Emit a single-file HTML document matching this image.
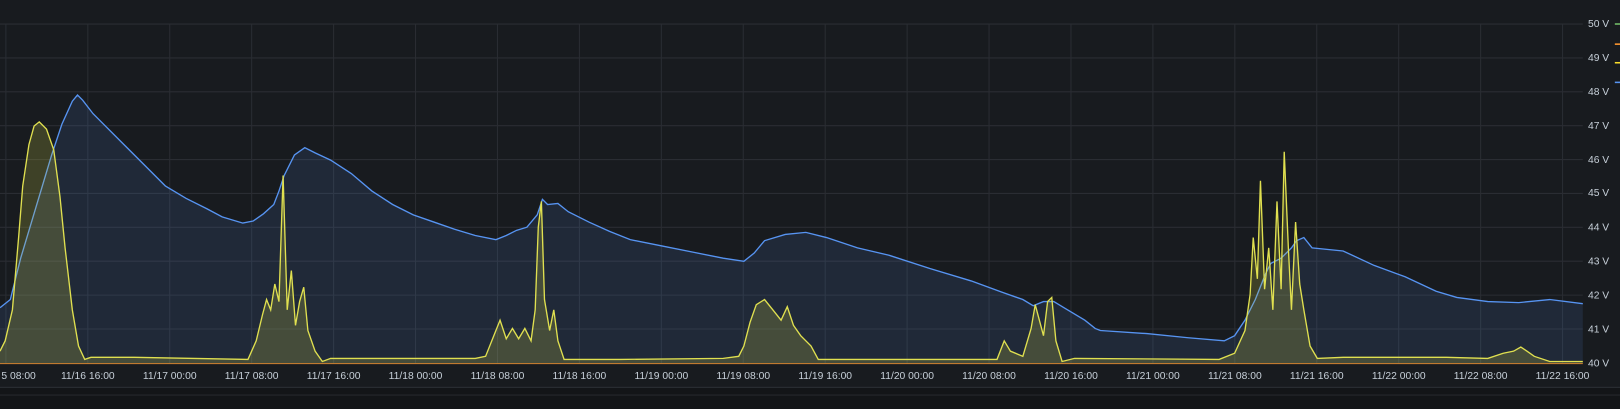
<!DOCTYPE html>
<html><head><style>
html,body{margin:0;padding:0;background:#181b1f;width:1620px;height:409px;overflow:hidden}
svg{display:block}
text{font-family:"Liberation Sans",sans-serif;font-size:10px;fill:#c7d0d9}
</style></head><body>
<svg width="1620" height="409" viewBox="0 0 1568 396" preserveAspectRatio="none">
<rect x="0" y="0" width="1568" height="396" fill="#181b1f"/>
<g stroke="#2a2d33" stroke-width="1">
<line x1="0" y1="23.3" x2="1532" y2="23.3"/><line x1="0" y1="56.1" x2="1532" y2="56.1"/>
<line x1="0" y1="88.9" x2="1532" y2="88.9"/><line x1="0" y1="121.7" x2="1532" y2="121.7"/>
<line x1="0" y1="154.5" x2="1532" y2="154.5"/><line x1="0" y1="187.3" x2="1532" y2="187.3"/>
<line x1="0" y1="220.1" x2="1532" y2="220.1"/><line x1="0" y1="252.9" x2="1532" y2="252.9"/>
<line x1="0" y1="285.7" x2="1532" y2="285.7"/><line x1="0" y1="318.5" x2="1532" y2="318.5"/>
<line x1="5.7" y1="23" x2="5.7" y2="352"/><line x1="85" y1="23" x2="85" y2="352"/><line x1="164.3" y1="23" x2="164.3" y2="352"/><line x1="243.6" y1="23" x2="243.6" y2="352"/><line x1="322.9" y1="23" x2="322.9" y2="352"/><line x1="402.2" y1="23" x2="402.2" y2="352"/><line x1="481.5" y1="23" x2="481.5" y2="352"/><line x1="560.8" y1="23" x2="560.8" y2="352"/><line x1="640.1" y1="23" x2="640.1" y2="352"/><line x1="719.4" y1="23" x2="719.4" y2="352"/><line x1="798.7" y1="23" x2="798.7" y2="352"/><line x1="878" y1="23" x2="878" y2="352"/><line x1="957.3" y1="23" x2="957.3" y2="352"/><line x1="1036.6" y1="23" x2="1036.6" y2="352"/><line x1="1115.9" y1="23" x2="1115.9" y2="352"/><line x1="1195.2" y1="23" x2="1195.2" y2="352"/><line x1="1274.5" y1="23" x2="1274.5" y2="352"/><line x1="1353.8" y1="23" x2="1353.8" y2="352"/><line x1="1433.1" y1="23" x2="1433.1" y2="352"/><line x1="1512.4" y1="23" x2="1512.4" y2="352"/>
</g>
<polygon fill="rgba(87,148,242,0.12)" points="0,352 0,298 10,290 20,250 35,200 50,150 60,120 70,98 75,92 80,97 90,110 100,120 120,140 140,160 160,180 180,192 200,202 215,210 235,216 245,214 255,207 265,198 270,185 275,170 285,150 295,143 305,148 320,155 340,168 360,185 380,198 400,208 420,215 440,222 460,228 480,232 490,228 500,223 510,220 520,208 525,193 530,198 540,197 550,205 570,215 590,224 610,232 640,238 670,244 700,250 720,253 730,245 740,233 760,227 780,225 800,230 830,240 860,247 900,260 940,272 970,283 990,290 1000,296 1010,292 1020,292 1030,298 1050,310 1060,318 1065,320 1110,323 1150,327 1185,330 1195,325 1205,310 1215,290 1225,265 1230,255 1240,250 1250,240 1255,233 1262,230 1270,240 1300,243 1330,257 1360,268 1390,282 1410,288 1440,292 1470,293 1500,290 1532,294 1532,352"/>
<polyline fill="none" stroke="#5794f2" stroke-width="1.3" points="0,298 10,290 20,250 35,200 50,150 60,120 70,98 75,92 80,97 90,110 100,120 120,140 140,160 160,180 180,192 200,202 215,210 235,216 245,214 255,207 265,198 270,185 275,170 285,150 295,143 305,148 320,155 340,168 360,185 380,198 400,208 420,215 440,222 460,228 480,232 490,228 500,223 510,220 520,208 525,193 530,198 540,197 550,205 570,215 590,224 610,232 640,238 670,244 700,250 720,253 730,245 740,233 760,227 780,225 800,230 830,240 860,247 900,260 940,272 970,283 990,290 1000,296 1010,292 1020,292 1030,298 1050,310 1060,318 1065,320 1110,323 1150,327 1185,330 1195,325 1205,310 1215,290 1225,265 1230,255 1240,250 1250,240 1255,233 1262,230 1270,240 1300,243 1330,257 1360,268 1390,282 1410,288 1440,292 1470,293 1500,290 1532,294"/>
<polygon fill="rgba(200,200,70,0.22)" points="0,352 0,340 5,330 12,300 18,230 22,180 28,140 33,122 38,118 45,125 52,145 58,190 63,240 70,300 76,335 82,348 88,346 130,346 240,348 248,330 254,305 258,290 262,300 266,275 270,292 274,170 278,300 282,262 286,315 290,292 294,278 298,320 305,340 312,350 320,347 460,347 470,345 478,325 484,310 490,328 496,318 502,328 508,318 514,330 518,300 521,220 524,195 527,290 532,320 536,300 540,330 546,348 600,348 700,347 715,345 720,335 726,312 732,295 740,290 748,300 756,310 762,297 768,315 775,325 785,335 792,348 800,348 900,348 965,348 972,330 978,340 990,345 998,318 1002,295 1006,310 1010,325 1014,292 1018,288 1022,330 1028,350 1040,347 1180,348 1195,342 1205,320 1210,285 1213,230 1217,270 1220,175 1224,280 1228,240 1232,300 1236,195 1240,280 1243,147 1247,240 1250,300 1254,215 1258,275 1262,300 1268,335 1275,347 1300,346 1400,346 1440,347 1455,342 1465,340 1472,336 1478,340 1485,345 1500,350 1532,350 1532,352"/>
<polyline fill="none" stroke="#e0e050" stroke-width="1.3" points="0,340 5,330 12,300 18,230 22,180 28,140 33,122 38,118 45,125 52,145 58,190 63,240 70,300 76,335 82,348 88,346 130,346 240,348 248,330 254,305 258,290 262,300 266,275 270,292 274,170 278,300 282,262 286,315 290,292 294,278 298,320 305,340 312,350 320,347 460,347 470,345 478,325 484,310 490,328 496,318 502,328 508,318 514,330 518,300 521,220 524,195 527,290 532,320 536,300 540,330 546,348 600,348 700,347 715,345 720,335 726,312 732,295 740,290 748,300 756,310 762,297 768,315 775,325 785,335 792,348 800,348 900,348 965,348 972,330 978,340 990,345 998,318 1002,295 1006,310 1010,325 1014,292 1018,288 1022,330 1028,350 1040,347 1180,348 1195,342 1205,320 1210,285 1213,230 1217,270 1220,175 1224,280 1228,240 1232,300 1236,195 1240,280 1243,147 1247,240 1250,300 1254,215 1258,275 1262,300 1268,335 1275,347 1300,346 1400,346 1440,347 1455,342 1465,340 1472,336 1478,340 1485,345 1500,350 1532,350"/>
<line x1="0" y1="352" x2="1532" y2="352" stroke="#c07a30" stroke-width="1"/>
<g>
<text x="1537" y="26">50 V</text><text x="1537" y="59">49 V</text><text x="1537" y="92">48 V</text><text x="1537" y="125">47 V</text><text x="1537" y="158">46 V</text><text x="1537" y="190">45 V</text><text x="1537" y="223">44 V</text><text x="1537" y="256">43 V</text><text x="1537" y="289">42 V</text><text x="1537" y="322">41 V</text><text x="1537" y="355">40 V</text>
</g>
<g text-anchor="middle">
<text x="18" y="367">5 08:00</text><text x="85" y="367">11/16 16:00</text><text x="164.3" y="367">11/17 00:00</text><text x="243.6" y="367">11/17 08:00</text><text x="322.9" y="367">11/17 16:00</text><text x="402.2" y="367">11/18 00:00</text><text x="481.5" y="367">11/18 08:00</text><text x="560.8" y="367">11/18 16:00</text><text x="640.1" y="367">11/19 00:00</text><text x="719.4" y="367">11/19 08:00</text><text x="798.7" y="367">11/19 16:00</text><text x="878" y="367">11/20 00:00</text><text x="957.3" y="367">11/20 08:00</text><text x="1036.6" y="367">11/20 16:00</text><text x="1115.9" y="367">11/21 00:00</text><text x="1195.2" y="367">11/21 08:00</text><text x="1274.5" y="367">11/21 16:00</text><text x="1353.8" y="367">11/22 00:00</text><text x="1433.1" y="367">11/22 08:00</text><text x="1512.4" y="367">11/22 16:00</text>
</g>
<rect x="1563" y="22.5" width="5" height="1.5" fill="#73bf69"/>
<rect x="1563" y="42" width="5" height="1.5" fill="#ff9830"/>
<rect x="1563" y="60" width="5" height="1.5" fill="#fade2a"/>
<rect x="1563" y="79" width="5" height="1.5" fill="#5794f2"/>
<rect x="0" y="374.5" width="1568" height="21.5" fill="#131518"/>
<line x1="0" y1="375" x2="1568" y2="375" stroke="#2c2f35"/>
<line x1="0" y1="382.5" x2="1568" y2="382.5" stroke="#24272c"/>
</svg>
</body></html>
